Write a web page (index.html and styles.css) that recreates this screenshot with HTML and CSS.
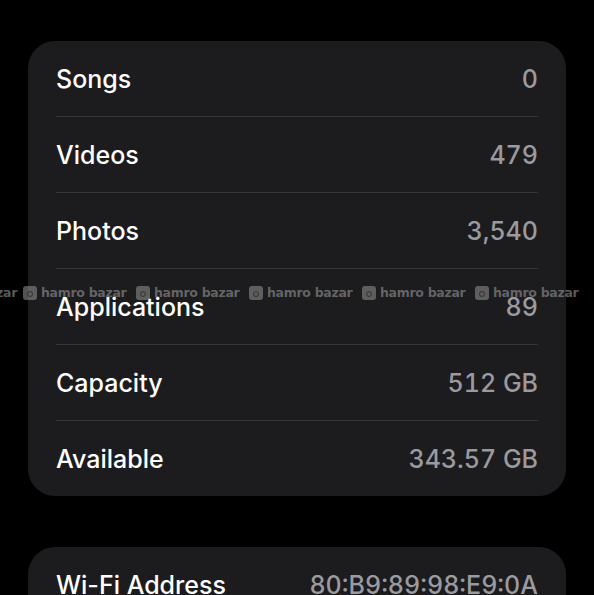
FILE: index.html
```html
<!DOCTYPE html>
<html lang="en">
<head>
  <meta charset="UTF-8" />
  <meta name="viewport" content="width=device-width, initial-scale=1" />
  <title>About</title>
  <link rel="stylesheet" href="styles.css">
</head>
<body>
  <div class="screen">
    <div class="group">
      <div class="row"><span class="label">Songs</span><span class="value">0</span></div>
      <div class="row"><span class="label">Videos</span><span class="value">479</span></div>
      <div class="row"><span class="label">Photos</span><span class="value">3,540</span></div>
      <div class="row"><span class="label">Applications</span><span class="value">89</span></div>
      <div class="row"><span class="label">Capacity</span><span class="value">512 GB</span></div>
      <div class="row"><span class="label">Available</span><span class="value">343.57 GB</span></div>
    </div>

    <div class="group">
      <div class="row"><span class="label">Wi-Fi Address</span><span class="value">80:B9:89:98:E9:0A</span></div>
    </div>

    <!-- watermark strip over the list -->
    <div class="watermark">
      <span class="mark"><span class="wm-text">zar</span></span>
      <span class="mark"><span class="wm-logo"></span><span class="wm-text">hamro bazar</span></span>
      <span class="mark"><span class="wm-logo"></span><span class="wm-text">hamro bazar</span></span>
      <span class="mark"><span class="wm-logo"></span><span class="wm-text">hamro bazar</span></span>
      <span class="mark"><span class="wm-logo"></span><span class="wm-text">hamro bazar</span></span>
      <span class="mark"><span class="wm-logo"></span><span class="wm-text">hamro bazar</span></span>
    </div>
  </div>
</body>
</html>
```

FILE: styles.css
```css
* {
  box-sizing: border-box;
}
html, body {
  margin: 0;
  background: #000;
}
body {
  font-family: Inter, "Noto Sans", sans-serif;
  color: #fff;
  overflow: hidden;
}
.screen {
  position: relative;
  width: 594px;
  height: 595px;
  padding: 41px 28px 0 28px;
  display: flex;
  flex-direction: column;
  gap: 51px;
}
.group {
  background: #1c1c1e;
  border-radius: 27px;
  padding: 0 28px;
  flex-shrink: 0;
}
.row {
  height: 76px;
  display: flex;
  align-items: center;
  justify-content: space-between;
  border-bottom: 1px solid #38383a;
  font-size: 25px;
  font-weight: 500;
  white-space: nowrap;
}
.row:last-child {
  height: 75px;
  border-bottom: none;
}
.label {
  color: #fff;
}
.value {
  color: #9a9a9f;
  font-variant-numeric: tabular-nums;
}
.watermark {
  position: absolute;
  top: 285px;
  left: -90px;
  display: flex;
  white-space: nowrap;
  pointer-events: none;
}
.mark {
  width: 113px;
  display: flex;
  align-items: center;
  gap: 4px;
  flex-shrink: 0;
}
.mark:first-child {
  justify-content: flex-end;
  padding-right: 6px;
}
.wm-logo {
  width: 14px;
  height: 14px;
  border-radius: 3px;
  background: rgba(150, 150, 150, 0.55);
  position: relative;
}
.wm-logo::after {
  content: "";
  position: absolute;
  left: 4px;
  top: 5px;
  width: 4px;
  height: 4px;
  border: 1.5px solid rgba(40, 40, 40, 0.8);
  border-radius: 50%;
}
.wm-text {
  font-family: "DejaVu Sans", sans-serif;
  font-weight: bold;
  font-size: 12.5px;
  letter-spacing: -0.3px;
  color: rgba(150, 150, 150, 0.6);
}
```
